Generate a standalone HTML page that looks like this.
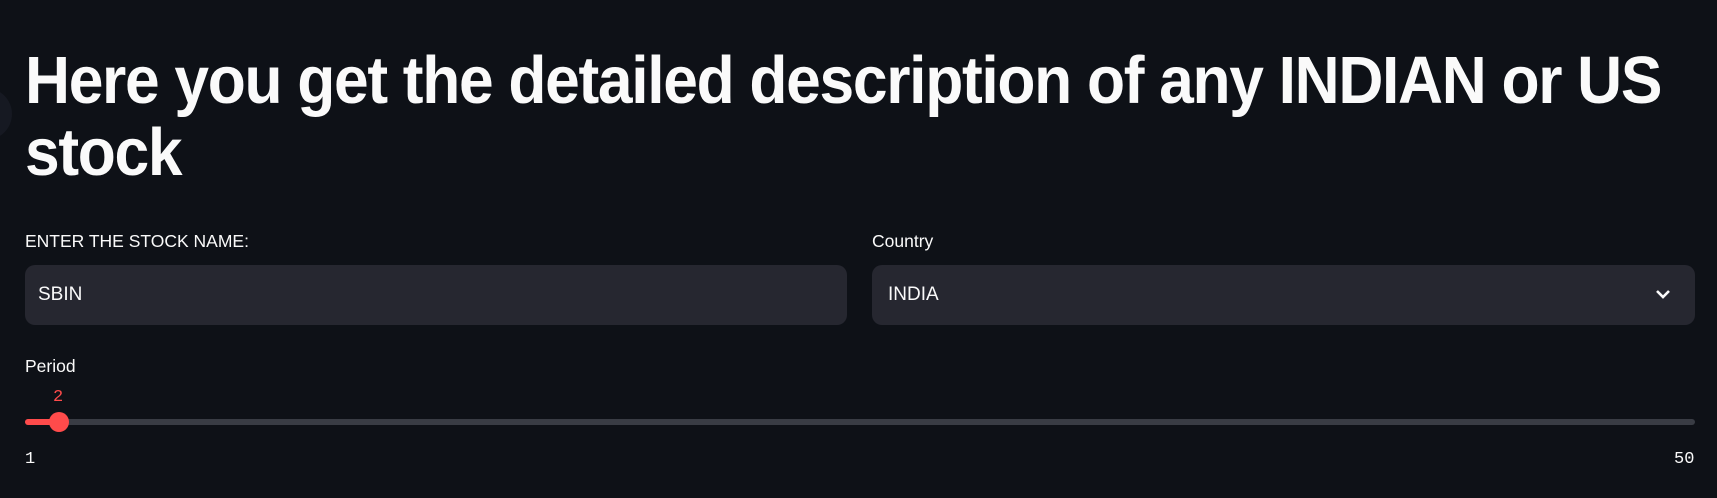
<!DOCTYPE html>
<html><head><meta charset="utf-8"><style>
html,body{margin:0;padding:0;background:#0e1117;width:1717px;height:498px;overflow:hidden;font-family:"Liberation Sans",sans-serif;color:#fafafa}
.abs{position:absolute}
h1{position:absolute;left:25px;top:45px;margin:0;font-size:67px;line-height:72px;font-weight:bold;letter-spacing:-1.4px;white-space:nowrap;transform:scaleX(0.93);transform-origin:0 0}
.lbl{font-size:17.5px;color:#fafafa}
.box{background:#262730;border-radius:10px;height:60px;top:265px}
.val{font-size:19px;top:284px}
.mono{font-family:"Liberation Mono",monospace;font-size:17px}
</style></head><body>
<div class="abs" style="left:-40px;top:88px;width:52px;height:52px;border-radius:50%;background:#161922"></div>
<h1>Here you get the detailed description of any INDIAN or US<br>stock</h1>
<div class="abs lbl" style="left:25px;top:231px">ENTER THE STOCK NAME:</div>
<div class="abs lbl" style="left:872px;top:231px">Country</div>
<div class="abs box" style="left:25px;width:822px"></div>
<div class="abs box" style="left:872px;width:823px"></div>
<div class="abs val" style="left:38px">SBIN</div>
<div class="abs val" style="left:888px">INDIA</div>
<svg class="abs" style="left:1654px;top:287px" width="18" height="14" viewBox="0 0 18 14"><path d="M3 4 L9 10 L15 4" stroke="#fafafa" stroke-width="2.6" fill="none"/></svg>
<div class="abs lbl" style="left:25px;top:356px">Period</div>
<div class="abs mono" style="left:53px;top:388px;color:#ff4b4b">2</div>
<div class="abs" style="left:25px;top:419px;width:1670px;height:6px;border-radius:3px;background:#393c44"></div>
<div class="abs" style="left:25px;top:419px;width:34px;height:6px;border-radius:3px;background:#ff4b4b"></div>
<div class="abs" style="left:49px;top:412px;width:20px;height:20px;border-radius:50%;background:#ff4b4b"></div>
<div class="abs mono" style="left:25px;top:450px">1</div>
<div class="abs mono" style="left:1674px;top:450px">50</div>
</body></html>
